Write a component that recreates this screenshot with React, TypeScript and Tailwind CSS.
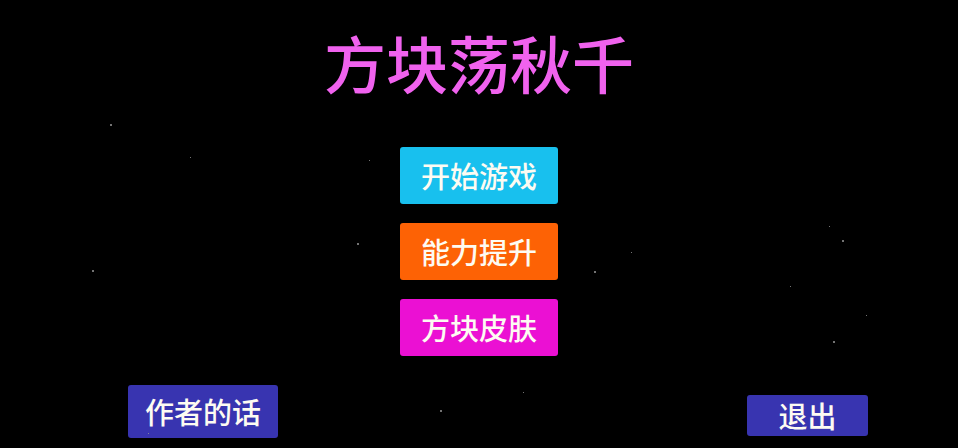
import React from "react";

const STARS: [number, number, number][] = [
  [110, 124, 1.5], [190, 157, 1], [369, 160, 1], [357, 243, 1.5], [92, 270, 1.5],
  [829, 226, 1], [842, 240, 1.5], [631, 252, 1], [594, 271, 1.5], [790, 286, 1],
  [866, 315, 1], [833, 341, 1.5], [523, 392, 1], [440, 410, 1.5], [148, 433, 1],
];

const MENU = [
  { label: "开始游戏", cls: "bg-[#18c0ee]" },
  { label: "能力提升", cls: "bg-[#fd6205]" },
  { label: "方块皮肤", cls: "bg-[#eb10d3]" },
];

export default function App() {
  return (
    <div
      className="relative flex h-[448px] w-full flex-col items-center overflow-hidden bg-black text-white"
      style={{ fontFamily: '"Noto Sans CJK SC", "Noto Sans", sans-serif' }}
    >
      {/* starfield */}
      {STARS.map(([x, y, s], i) => (
        <span
          key={i}
          className="absolute rounded-full bg-[#9a9a9a]"
          style={{ left: x, top: y, width: s, height: s }}
        />
      ))}

      <h1 className="mt-[31px] text-[62px] font-medium leading-none text-[#f062ee]">方块荡秋千</h1>

      <div className="mt-[54px] flex flex-col gap-[19px]">
        {MENU.map((m) => (
          <button
            key={m.label}
            className={`flex h-[57px] w-[158px] items-center justify-center rounded-[3px] text-[29px] font-medium leading-none text-[#fdfbf2] ${m.cls}`}
          >
            {m.label}
          </button>
        ))}
      </div>

      <div className="mt-auto flex w-full items-end justify-between">
        <button className="mb-[10px] ml-[128px] flex h-[53px] w-[150px] items-center justify-center rounded-[3px] bg-[#3834b0] text-[29px] font-medium leading-none text-[#fdfbf2]">
          作者的话
        </button>
        <button className="mb-[12px] mr-[90px] flex h-[41px] w-[121px] items-center justify-center rounded-[3px] bg-[#3834b0] text-[29px] font-medium leading-none text-[#fdfbf2]">
          退出
        </button>
      </div>
    </div>
  );
}
